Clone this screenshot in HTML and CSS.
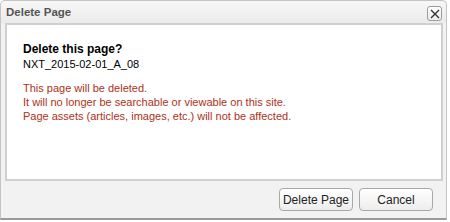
FILE: index.html
```html
<!DOCTYPE html>
<html lang="en">
<head>
    <meta charset="UTF-8">
    <title>Delete Page</title>
    <link rel="stylesheet" href="styles.css">
</head>
<body>
    <div class="dialog">
        <div class="dialog-title">
            <span class="title-text">Delete Page</span>
            <button class="close-btn" type="button" title="Close">
                <svg width="10" height="10" viewBox="0 0 10 10">
                    <path d="M1 1 L9 9 M9 1 L1 9" stroke="#333" stroke-width="1.4" fill="none"/>
                </svg>
            </button>
        </div>
        <div class="dialog-body">
            <p class="question">Delete this page?</p>
            <p class="page-name">NXT_2015-02-01_A_08</p>
            <p class="warning">
                This page will be deleted.<br>
                It will no longer be searchable or viewable on this site.<br>
                Page assets (articles, images, etc.) will not be affected.
            </p>
        </div>
        <div class="dialog-footer">
            <button type="button" class="btn">Delete Page</button>
            <button type="button" class="btn">Cancel</button>
        </div>
    </div>
</body>
</html>
```

FILE: styles.css
```css
body {
    margin: 0;
    background: #fff;
    font-family: "Liberation Sans", Arial, sans-serif;
}
.dialog {
    width: 445px;
    height: 217px;
    background: #f2f2f2;
    border: 1px solid #c4c4c4;
    border-bottom: 2px solid #9a9a9a;
    border-radius: 5px 5px 0 0;
    display: flex;
    flex-direction: column;
}
.dialog-title {
    height: 22px;
    display: flex;
    align-items: center;
    justify-content: space-between;
    padding: 0 4px 0 5px;
    background: linear-gradient(#f7f7f7, #ebebeb);
    border-radius: 5px 5px 0 0;
}
.title-text {
    font-weight: bold;
    font-size: 11.5px;
    color: #555;
}
.close-btn {
    width: 15px;
    height: 15px;
    padding: 0;
    margin-top: 3px;
    display: flex;
    align-items: center;
    justify-content: center;
    background: linear-gradient(#ffffff, #ececec);
    border: 1px solid #9c9c9c;
    border-radius: 3px;
}
.dialog-body {
    margin: 0 3px 0 4px;
    padding: 16px 16px 0;
    background: #fff;
    border: 2px solid #cfcfcf;
    box-sizing: border-box;
    height: 158px;
    font-size: 11px;
    line-height: 14px;
}
.dialog-body p {
    margin: 0;
}
.question {
    font-weight: bold;
    font-size: 12px;
    line-height: 16px;
    color: #000;
}
.page-name {
    color: #000;
}
.warning {
    margin-top: 10px !important;
    color: #ae3118;
}
.dialog-footer {
    flex: 1;
    display: flex;
    justify-content: flex-end;
    align-items: center;
    gap: 6px;
    padding: 0 13px 0 0;
}
.btn {
    min-width: 74px;
    height: 23px;
    padding: 0 3px;
    font-family: "Liberation Sans", Arial, sans-serif;
    font-size: 12px;
    color: #222;
    background: linear-gradient(#ffffff, #ededed);
    border: 1px solid #a8a8a8;
    border-radius: 4px;
}
```
